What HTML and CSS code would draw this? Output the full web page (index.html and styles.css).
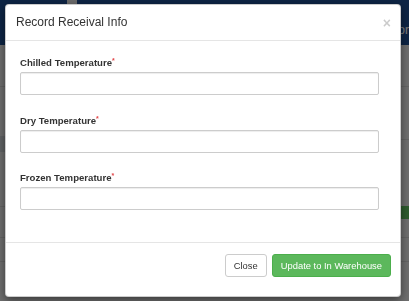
FILE: index.html
```html
<!DOCTYPE html>
<html lang="en">
<head>
    <meta charset="UTF-8">
    <meta name="viewport" content="width=device-width, initial-scale=1.0">
    <title>Record Receival Info</title>
    <link rel="stylesheet" href="styles.css">
</head>
<body>

<!-- page behind the dialog -->
<div class="page">
    <div class="page-nav">
        <span class="nav-tab"></span>
        <span class="nav-link">Vendor</span>
    </div>
    <div class="page-body">
        <div class="page-row row-a"></div>
        <div class="page-row row-b"><span class="row-mark"></span></div>
        <div class="page-row row-c"><span class="row-status"></span></div>
        <div class="page-row row-d"></div>
        <div class="page-row row-e"></div>
    </div>
</div>

<div class="backdrop"></div>

<div class="modal">
    <div class="modal-header">
        <h4 class="modal-title">Record Receival Info</h4>
        <button type="button" class="close">&times;</button>
    </div>
    <div class="modal-body">
        <form id="receival-form">
            <div class="form-group">
                <label for="chilled">Chilled Temperature<span class="req">*</span></label>
                <input type="text" id="chilled" name="chilled" class="form-control">
            </div>
            <div class="form-group">
                <label for="dry">Dry Temperature<span class="req">*</span></label>
                <input type="text" id="dry" name="dry" class="form-control">
            </div>
            <div class="form-group">
                <label for="frozen">Frozen Temperature<span class="req">*</span></label>
                <input type="text" id="frozen" name="frozen" class="form-control">
            </div>
        </form>
    </div>
    <div class="modal-footer">
        <button type="button" class="btn btn-default">Close</button>
        <button type="button" class="btn btn-success">Update to In Warehouse</button>
    </div>
</div>

</body>
</html>
```

FILE: styles.css
```css
body {
    font-family: "Liberation Sans", Arial, sans-serif;
    margin: 0;
    padding: 0;
    color: #333;
    background-color: #dedede;
    overflow: hidden;
}

/* page behind the modal */
.page {
    height: 301px;
    overflow: hidden;
}
.page-nav {
    height: 45px;
    background-color: #1c4a8a;
    display: flex;
    align-items: flex-start;
}
.nav-tab {
    display: block;
    width: 10px;
    height: 4px;
    margin-left: 67px;
    background-color: #d8d8d8;
}
.nav-link {
    margin-left: auto;
    margin-top: 23px;
    color: #fff;
    font-size: 12px;
}
.page-row {
    border-bottom: 1px solid #c8c8c8;
    box-sizing: border-box;
}
.row-a { height: 42px; }
.row-b { height: 53px; padding-top: 49px; }
.row-c { height: 62px; padding-top: 66px; display: flex; }
.row-d { height: 31px; }
.row-e { height: 24px; }
.row-mark {
    display: block;
    width: 6px;
    height: 16px;
    background-color: #c4c8cc;
}
.row-status {
    display: block;
    margin-left: auto;
    width: 10px;
    height: 13px;
    background-color: #5cb85c;
}

.backdrop {
    position: fixed;
    top: 0;
    left: 0;
    right: 0;
    bottom: 0;
    background-color: rgba(0, 0, 0, 0.5);
}

/* dialog */
.modal {
    position: absolute;
    top: 4px;
    left: 5px;
    width: 396px;
    box-sizing: border-box;
    background-color: #fff;
    border: 1px solid rgba(0, 0, 0, 0.2);
    border-radius: 4px;
    box-shadow: 0 3px 10px rgba(0, 0, 0, 0.5);
}
.modal-header {
    display: flex;
    align-items: flex-start;
    justify-content: space-between;
    padding: 9px 9px 10px 10px;
    border-bottom: 1px solid #e5e5e5;
}
.modal-title {
    margin: 0;
    font-size: 12px;
    font-weight: normal;
    line-height: 16px;
    color: #333;
}
.close {
    border: none;
    background: none;
    padding: 0;
    margin-top: 2px;
    font-family: "Liberation Sans", Arial, sans-serif;
    font-size: 14px;
    font-weight: bold;
    line-height: 14px;
    color: #000;
    opacity: 0.2;
    cursor: pointer;
}
.modal-body {
    padding: 16px 21px 12.5px 14px;
}
.form-group {
    margin-bottom: 19.5px;
}
.form-group label {
    display: block;
    font-size: 9.6px;
    font-weight: bold;
    line-height: 12px;
    margin-bottom: 3px;
    color: #333;
}
.req {
    color: #e2474a;
    font-size: 7px;
    vertical-align: top;
    line-height: 8px;
}
.form-control {
    display: block;
    width: 100%;
    height: 23px;
    box-sizing: border-box;
    padding: 4px 8px;
    font-size: 9.3px;
    border: 1px solid #ccc;
    border-radius: 2px;
    box-shadow: inset 0 1px 1px rgba(0, 0, 0, 0.075);
    background-color: #fff;
}
.modal-footer {
    display: flex;
    justify-content: flex-end;
    gap: 5px;
    padding: 11px 9px 19px;
    border-top: 1px solid #e5e5e5;
}
.btn {
    font-family: "Liberation Sans", Arial, sans-serif;
    font-size: 9.4px;
    line-height: 13px;
    height: 23px;
    padding: 4px 8px;
    border: 1px solid transparent;
    border-radius: 3px;
    cursor: pointer;
}
.btn-default {
    background-color: #fff;
    border-color: #ccc;
    color: #333;
}
.btn-success {
    background-color: #5cb85c;
    border-color: #4cae4c;
    color: #fff;
}
```
